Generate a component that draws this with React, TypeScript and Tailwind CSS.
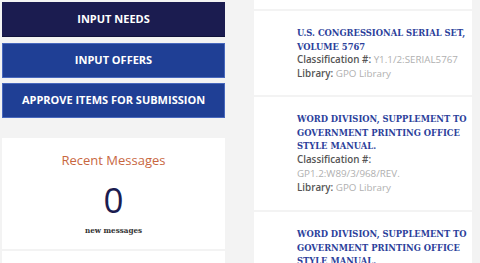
const items = [
  {
    title: ["U.S. CONGRESSIONAL SERIAL SET,", "VOLUME 5767"],
    cls: "Y1.1/2:SERIAL5767",
    inline: true,
  },
  {
    title: ["WORD DIVISION, SUPPLEMENT TO", "GOVERNMENT PRINTING OFFICE", "STYLE MANUAL."],
    cls: "GP1.2:W89/3/968/REV.",
    inline: false,
  },
  {
    title: ["WORD DIVISION, SUPPLEMENT TO", "GOVERNMENT PRINTING OFFICE", "STYLE MANUAL."],
    cls: "GP1.2:W89/3/968/REV.",
    inline: false,
  },
];

const slab = {
  fontFamily: '"DejaVu Serif Condensed", "DejaVu Serif", serif',
  fontStretch: "condensed",
};

const App = () => {
  return (
    <div
      className="flex h-[263px] w-[480px] items-start overflow-hidden bg-[#f3f3f3]"
      style={{ fontFamily: '"Open Sans", "Liberation Sans", sans-serif' }}
    >
      {/* left column */}
      <div className="ml-[2px] flex w-[223px] shrink-0 flex-col pt-[2px]">
        <button className="h-[35px] w-full shrink-0 border-b border-[#10123a] bg-[#1b1c50] text-[11px] font-bold text-white">
          INPUT NEEDS
        </button>
        <button className="mt-[6px] h-[35px] w-full shrink-0 border border-[#4868bd] bg-[#1f3f95] text-[11px] font-bold text-white">
          INPUT OFFERS
        </button>
        <button className="mt-[5px] h-[35px] w-full shrink-0 border border-[#4868bd] bg-[#1f3f95] text-[11px] font-bold text-white">
          APPROVE ITEMS FOR SUBMISSION
        </button>

        <div className="mt-[20px] flex h-[111px] shrink-0 flex-col items-center bg-white pt-[12px]">
          <p className="text-[13px] leading-[20px] text-[#c8673f]">Recent Messages</p>
          <p className="mt-[11px] text-[35px] leading-[38px] text-[#1b1c50]">0</p>
          <p className="mt-[5px] text-[8px] font-bold text-[#333]" style={slab}>
            new messages
          </p>
        </div>
        <div className="mt-[2px] h-[40px] shrink-0 bg-white" />
      </div>

      {/* right column */}
      <div className="ml-[29px] flex w-[218px] shrink-0 flex-col gap-[2px]">
        <div className="h-[9px] shrink-0 bg-white" />
        {items.map((it, i) => (
          <div
            key={i}
            className={`shrink-0 bg-white pl-[43px] pt-[15px] ${i === 0 ? "h-[84px]" : "h-[113px]"}`}
          >
            <div
              className="whitespace-nowrap text-[9.3px] font-bold leading-[13.5px] text-[#2c3f9b]"
              style={slab}
            >
              {it.title.map((t) => (
                <div key={t}>{t}</div>
              ))}
            </div>
            <div className="whitespace-nowrap text-[9.8px] leading-[14px] text-[#b0b0b0]">
              {it.inline ? (
                <div>
                  <span className="font-semibold text-[#555]">Classification #:</span> {it.cls}
                </div>
              ) : (
                <>
                  <div className="font-semibold text-[#555]">Classification #:</div>
                  <div>{it.cls}</div>
                </>
              )}
              <div>
                <span className="font-semibold text-[#555]">Library:</span> GPO Library
              </div>
            </div>
          </div>
        ))}
      </div>
    </div>
  );
};

export default App;
